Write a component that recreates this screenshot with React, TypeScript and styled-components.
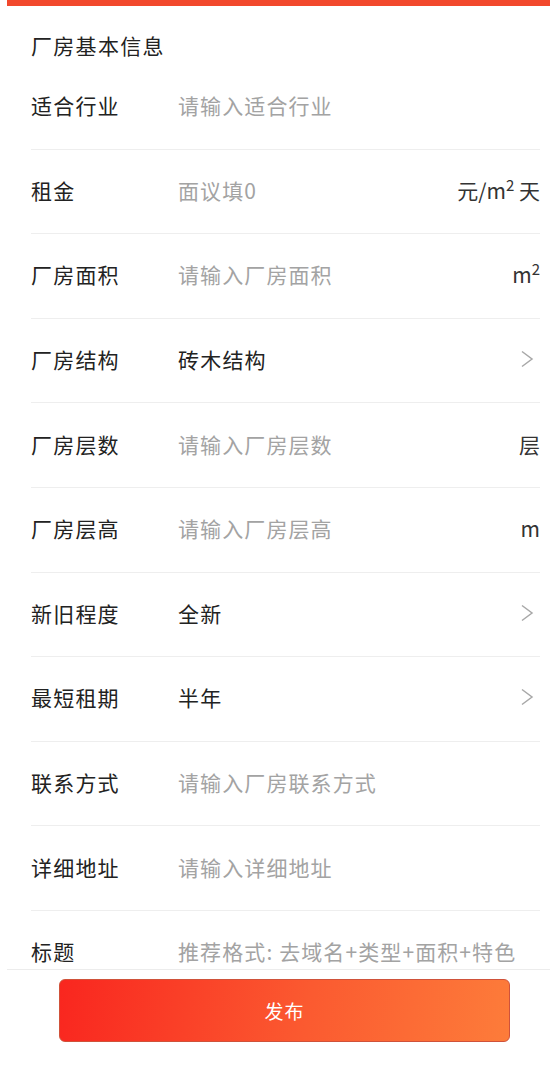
import React from "react";
import styled, { createGlobalStyle } from "styled-components";

type Field = {
  label: string;
  placeholder?: string;
  value?: string;
  unit?: "rent" | "area" | "floor" | "meter";
  select?: boolean;
};

const fields: Field[] = [
  { label: "适合行业", placeholder: "请输入适合行业" },
  { label: "租金", placeholder: "面议填0", unit: "rent" },
  { label: "厂房面积", placeholder: "请输入厂房面积", unit: "area" },
  { label: "厂房结构", value: "砖木结构", select: true },
  { label: "厂房层数", placeholder: "请输入厂房层数", unit: "floor" },
  { label: "厂房层高", placeholder: "请输入厂房层高", unit: "meter" },
  { label: "新旧程度", value: "全新", select: true },
  { label: "最短租期", value: "半年", select: true },
  { label: "联系方式", placeholder: "请输入厂房联系方式" },
  { label: "详细地址", placeholder: "请输入详细地址" },
  { label: "标题", placeholder: "推荐格式: 去域名+类型+面积+特色" },
];

const UnitText = ({ kind }: { kind: Field["unit"] }) => {
  if (kind === "rent")
    return (
      <Unit>
        元/m<Sup>2</Sup> 天
      </Unit>
    );
  if (kind === "area")
    return (
      <Unit>
        m<Sup>2</Sup>
      </Unit>
    );
  if (kind === "floor") return <Unit>层</Unit>;
  return <Unit>m</Unit>;
};

const App = () => {
  return (
    <Page>
      <GlobalStyle />
      <TopBar />
      <Form>
        <SectionTitle>厂房基本信息</SectionTitle>
        {fields.map((f) => (
          <Row key={f.label}>
            <Label>{f.label}</Label>
            {f.select ? (
              <SelectValue>{f.value}</SelectValue>
            ) : (
              <Input type="text" placeholder={f.placeholder} />
            )}
            {f.unit && <UnitText kind={f.unit} />}
            {f.select && (
              <Chevron width="14" height="18" viewBox="0 0 14 18">
                <path d="M2 1.5 L12 9 L2 16.5" />
              </Chevron>
            )}
          </Row>
        ))}
      </Form>
      <Footer>
        <SubmitButton type="button">发布</SubmitButton>
      </Footer>
    </Page>
  );
};

export default App;

const GlobalStyle = createGlobalStyle`
  html, body {
    margin: 0;
    padding: 0;
    background: #fff;
  }
  body {
    font-family: "Noto Sans CJK SC", "Noto Sans", sans-serif;
    color: #222;
  }
  * {
    box-sizing: border-box;
  }
`;

const Page = styled.div`
  width: 550px;
  min-height: 1068px;
  padding-left: 7px;
  background: #fff;
`;

const TopBar = styled.div`
  height: 6px;
  background: #f2482c;
`;

const Form = styled.div`
  padding: 0 10px 110px 24px;
`;

const SectionTitle = styled.div`
  padding: 23px 0 4px;
  font-size: 21px;
  line-height: 32px;
  letter-spacing: 1.3px;
  color: #222;
`;

const Row = styled.div`
  display: flex;
  align-items: center;
  height: 84.6px;
  padding-bottom: 3px;
  border-bottom: 1px solid #eeeeee;
`;

const Label = styled.div`
  width: 147px;
  flex-shrink: 0;
  font-size: 21px;
  letter-spacing: 1.2px;
  color: #222;
`;

const Input = styled.input`
  flex: 1;
  min-width: 0;
  border: none;
  outline: none;
  padding: 0;
  background: transparent;
  font-family: inherit;
  font-size: 21px;
  letter-spacing: 1.1px;
  color: #222;

  &::placeholder {
    color: #a3a3a3;
  }
`;

const SelectValue = styled.div`
  flex: 1;
  font-size: 21px;
  letter-spacing: 1.2px;
  color: #222;
`;

const Unit = styled.div`
  font-size: 21px;
  color: #333;
  white-space: nowrap;
  font-family: "Noto Sans CJK SC", sans-serif;
`;

const Sup = styled.sup`
  font-size: 15px;
  vertical-align: 8px;
  line-height: 0;
`;

const Chevron = styled.svg`
  margin-right: 6px;
  fill: none;
  stroke: #a8a8a8;
  stroke-width: 1.5;
`;

const Footer = styled.div`
  position: fixed;
  left: 7px;
  right: 0;
  bottom: 0;
  height: 99px;
  padding: 9px 40px 0 52px;
  background: #fff;
  border-top: 1px solid #ececec;
`;

const SubmitButton = styled.button`
  display: block;
  width: 451px;
  height: 63px;
  border: 1px solid #d0523a;
  border-radius: 6px;
  background: linear-gradient(100deg, #f9261f 0%, #fb5a30 55%, #fd7c3a 100%);
  color: #fff;
  font-family: "Noto Sans CJK SC", sans-serif;
  font-size: 19px;
  letter-spacing: 1px;
`;
